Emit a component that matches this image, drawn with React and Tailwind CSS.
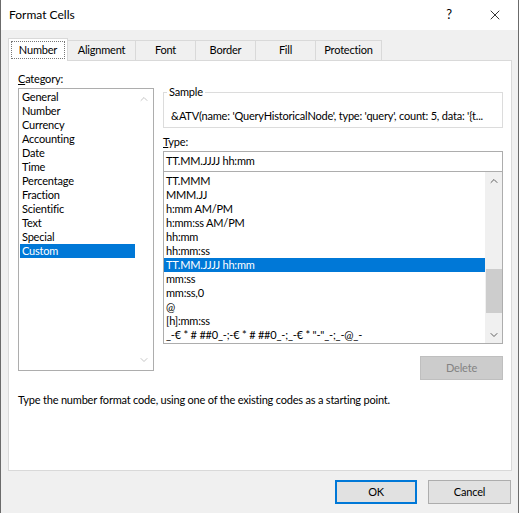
import { ChevronUp, ChevronDown, X } from "lucide-react";

const categories = [
  "General",
  "Number",
  "Currency",
  "Accounting",
  "Date",
  "Time",
  "Percentage",
  "Fraction",
  "Scientific",
  "Text",
  "Special",
  "Custom",
];

const types = [
  "TT.MMM",
  "MMM.JJ",
  "h:mm AM/PM",
  "h:mm:ss AM/PM",
  "hh:mm",
  "hh:mm:ss",
  "TT.MM.JJJJ hh:mm",
  "mm:ss",
  "mm:ss,0",
  "@",
  "[h]:mm:ss",
  "_-€ * # ##0_-;-€ * # ##0_-;_-€ * \"-\"_-;_-@_-",
];

const sample = "&ATV(name: 'QueryHistoricalNode', type: 'query', count: 5, data: '{t...";

const tabs = ["Alignment", "Font", "Border", "Fill", "Protection"];
const tabWidths = ["w-[68px]", "w-[60px]", "w-[60px]", "w-[60px]", "w-[66px]"];

export default function App() {
  return (
    <div
      className="w-[519px] h-[513px] bg-[#f0f0f0] border-l border-r border-[#6b6b6b] text-[11px] tracking-[-0.2px] text-black flex flex-col overflow-hidden"
      style={{ fontFamily: 'Lato, "Noto Sans", sans-serif' }}
    >
      {/* title bar */}
      <div className="h-[30px] bg-white flex items-center shrink-0">
        <div className="pl-[8px] text-[12px] tracking-normal">Format Cells</div>
        <div className="ml-auto w-[46px] text-center text-[13px]">?</div>
        <div className="w-[46px] flex justify-center">
          <X size={16} strokeWidth={1.2} />
        </div>
      </div>

      <div className="px-[7px] pt-[7px] flex flex-col">
        {/* tabs */}
        <div className="flex items-end h-[23px] relative z-10">
          <div className="w-[60px] h-[23px] bg-white border border-b-0 border-[#d9d9d9] -mb-px pt-[2px] pl-[2px] pr-[2px]">
            <div className="h-[18px] border border-dotted border-[#777] flex items-center justify-center">
              Number
            </div>
          </div>
          {tabs.map((t, i) => (
            <div
              key={t}
              className={`${tabWidths[i]} h-[20px] border border-l-0 border-b-0 border-[#d9d9d9] flex items-center justify-center`}
            >
              {t}
            </div>
          ))}
        </div>

        {/* panel */}
        <div className="h-[411px] w-[504px] bg-white border border-[#d9d9d9] flex flex-col">
          <div className="flex pl-[9px] pt-[8px]">
            {/* category */}
            <div className="w-[136px] flex flex-col">
              <div className="h-[19px] leading-[19px]">
                <span className="underline">C</span>ategory:
              </div>
              <div className="h-[283px] border border-[#adadad] flex">
                <div className="flex-1 pt-[1px] pl-[1px]">
                  {categories.map((c) => (
                    <div
                      key={c}
                      className={`h-[14px] leading-[14px] pl-[2px] ${
                        c === "Custom" ? "bg-[#0078d7] text-white" : ""
                      }`}
                    >
                      {c}
                    </div>
                  ))}
                </div>
                <div className="w-[18px] flex flex-col justify-between items-center py-[4px] text-[#c6c6c6]">
                  <ChevronUp size={12} strokeWidth={2} />
                  <ChevronDown size={12} strokeWidth={2} />
                </div>
              </div>
            </div>

            {/* right column */}
            <div className="w-[340px] ml-[9px] flex flex-col">
              <div className="relative mt-[23px] h-[36px] border border-[#dcdcdc]">
                <div className="absolute -top-[9px] left-[3px] bg-white px-[2px] leading-[16px]">
                  Sample
                </div>
                <div className="pt-[15px] pl-[7px] leading-[16px] whitespace-nowrap">
                  {sample}
                </div>
              </div>
              <div className="h-[23px] leading-[16px] pt-[6px]">
                <span className="underline">T</span>ype:
              </div>
              <div className="h-[21px] border border-[#adadad] pl-[2px] flex items-center">
                TT.MM.JJJJ hh:mm
              </div>
              <div className="h-[172px] border border-[#adadad] border-t-0 flex overflow-hidden">
                <div className="flex-1 pt-[2px] overflow-hidden">
                  {types.map((t) => (
                    <div
                      key={t}
                      className={`h-[14px] leading-[14px] pl-[2px] whitespace-nowrap ${
                        t === "TT.MM.JJJJ hh:mm" ? "bg-[#0078d7] text-white" : ""
                      }`}
                    >
                      {t}
                    </div>
                  ))}
                </div>
                <div className="w-[17px] bg-[#f0f0f0] flex flex-col items-center text-[#606060]">
                  <div className="h-[17px] flex items-center justify-center">
                    <ChevronUp size={12} strokeWidth={2} />
                  </div>
                  <div className="h-[80px]" />
                  <div className="w-[16px] h-[44px] bg-[#cdcdcd]" />
                  <div className="flex-1" />
                  <div className="h-[17px] flex items-center justify-center">
                    <ChevronDown size={12} strokeWidth={2} />
                  </div>
                </div>
              </div>
              <div className="flex justify-end mt-[12px]">
                <div className="w-[83px] h-[24px] bg-[#cccccc] border border-[#bfbfbf] text-[#838383] flex items-center justify-center">
                  Delete
                </div>
              </div>
            </div>
          </div>
          <div className="pl-[9px] mt-[12px]">
            Type the number format code, using one of the existing codes as a starting point.
          </div>
        </div>

        {/* buttons */}
        <div className="flex justify-end gap-[11px] mt-[9px]">
          <div className="w-[82px] h-[24px] bg-[#e1e1e1] border-2 border-[#0078d7] flex items-center justify-center">
            OK
          </div>
          <div className="w-[83px] h-[24px] bg-[#e1e1e1] border border-[#adadad] flex items-center justify-center">
            Cancel
          </div>
        </div>
      </div>
    </div>
  );
}
